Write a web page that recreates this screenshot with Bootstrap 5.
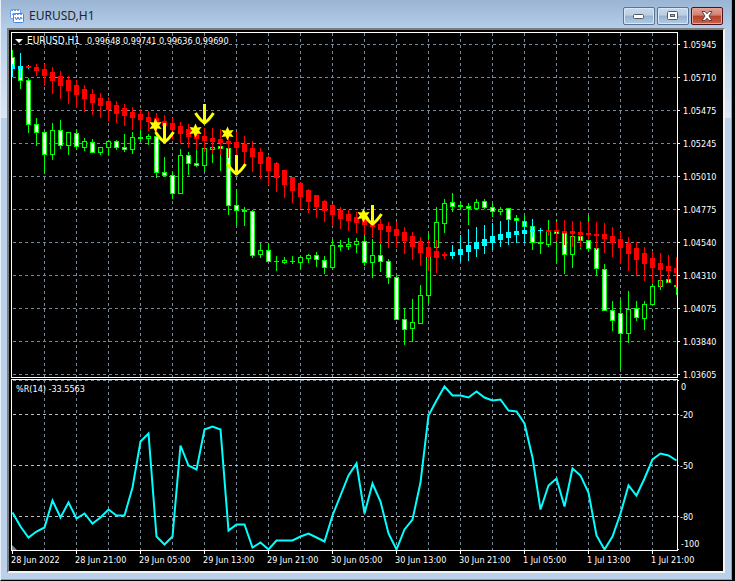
<!DOCTYPE html>
<html lang="en">
<head>
<meta charset="utf-8">
<meta name="viewport" content="width=device-width, initial-scale=1">
<title>EURUSD,H1</title>
<link href="https://cdn.jsdelivr.net/npm/bootstrap@5.3.0/dist/css/bootstrap.min.css" rel="stylesheet">
<style>
  body { background: #000; font-family: "Noto Sans", "Open Sans", sans-serif; }
  .chart-window {
    background: linear-gradient(#9ab4d3 0, #b4cde9 28px, #dbe7f5 118px, #b9d1ea 118px, #b9d1ea 100%);
    border: 1px solid #000; border-top: 0; border-left-color: #e9eff6;
    border-right-width: 2px;
    box-shadow: inset -1px -1px 0 #35c6dc;
    padding: 0 7px 7px 6px; margin-right: 1px;
  }
  .title-bar { height: 28px; padding: 4px 2px 0 3px; }
  .title-text { font-size: 12px; line-height: 16px; color: #1c2530; }
  .title-group { gap: 5px; }
  .caption-group { gap: 2px; }
  .caption-btn {
    width: 32px; height: 18px; border: 1px solid #5c7494; border-radius: 2px;
    background: linear-gradient(#c9d9ea 0, #b9cee4 45%, #96b1cf 50%, #b3cbe4 100%);
    box-shadow: inset 0 0 0 1px #d9e6f3;
  }
  .caption-btn.close-btn {
    border-color: #4b1220;
    background: linear-gradient(#e2a396 0, #d3806f 45%, #b5402a 50%, #c9634a 100%);
    box-shadow: inset 0 0 0 1px #e3a595;
  }
  .client-area { background: #000; border: 2px solid #f4f4f4; border-top-color: #7d7d7d; border-left-color: #7d7d7d; }
  .plot text { font-family: "DejaVu Sans Condensed", "Noto Sans", sans-serif; font-size: 9px; fill: #fff; }
  .plot .symbol-name { font-size: 10px; }
  .plot rect, .plot .crisp { shape-rendering: crispEdges; }
</style>
<script src="https://cdn.jsdelivr.net/npm/bootstrap@5.3.0/dist/js/bootstrap.bundle.min.js"></script>
</head>
<body>
<main class="chart-window vh-100 d-flex flex-column">
  <header class="title-bar d-flex align-items-center justify-content-between flex-shrink-0">
    <div class="title-group d-flex align-items-center">
      <svg width="14" height="14" viewBox="0 0 14 14" aria-hidden="true">
        <rect x=".5" y=".5" width="10" height="9" rx="1" fill="#fff" stroke="#6a9bea"/>
        <path d="M1 1.500h9" stroke="#6a9bea" stroke-dasharray="2 1"/><path d="M2 6l1.500-2 1.500 2 1-2" fill="none" stroke="#5b8fe6"/>
        <rect x="3.500" y="4.500" width="10" height="9" rx="1" fill="#fff" stroke="#4a82e0"/>
        <path d="M4 5.500h9" stroke="#6a9bea" stroke-dasharray="2 1"/><path d="M5 8l1.500 3L8 8l1.500 3L11 8l1 2" fill="none" stroke="#4078dc"/>
      </svg>
      <h1 class="title-text m-0 fw-normal">EURUSD,H1</h1>
    </div>
    <div class="caption-group d-flex">
      <button type="button" class="caption-btn p-0 d-flex align-items-center justify-content-center" aria-label="Minimize">
        <svg width="12" height="6" viewBox="0 0 12 6"><rect x=".5" y="1.500" width="10" height="4" rx="1" fill="#fff" stroke="#505966"/></svg>
      </button>
      <button type="button" class="caption-btn p-0 d-flex align-items-center justify-content-center" aria-label="Restore">
        <svg width="12" height="10" viewBox="0 0 12 10"><rect x=".5" y=".5" width="10" height="8" rx="1" fill="#fff" stroke="#505966"/><rect x="3.500" y="3.500" width="4" height="2" fill="#9db5d0" stroke="#505966"/></svg>
      </button>
      <button type="button" class="caption-btn close-btn p-0 d-flex align-items-center justify-content-center" aria-label="Close">
        <svg width="12" height="10" viewBox="0 0 12 10"><path d="M1 .5h3l2 2.300L8 .5h3L8 5l3 4.500H8L6 7.200 4 9.500H1L4 5z" fill="#fff" stroke="#5a3f45"/></svg>
      </button>
    </div>
  </header>
  <section class="client-area flex-grow-1 overflow-hidden">
    <svg id="plot" class="plot d-block w-100 h-100" viewBox="9 30 714 541" preserveAspectRatio="xMinYMin meet" role="img" aria-label="EURUSD hourly candles with Williams %R"></svg>
  </section>
</main>
<script>
const plot = document.getElementById('plot');
const NS = 'http://www.w3.org/2000/svg';
function add(tag, attrs, text) {
  const el = document.createElementNS(NS, tag);
  for (const k in attrs) el.setAttribute(k, attrs[k]);
  if (text !== undefined) el.textContent = text;
  plot.appendChild(el);
  return el;
}
const rect = (x, y, width, height, fill, extra) => add('rect', { x, y, width, height, fill, ...extra });
const xOf = i => 12 + 8 * i;
const GRID = '#778899', LIME = '#00ff00', RED = '#ff0000', AQUA = '#00ffff';

const clip = add('clipPath', { id: 'inner' });
clip.innerHTML = '<rect x="12" y="33" width="665" height="517"/>';

/* grid */
const dash = { 'stroke-width': 1, 'stroke-dasharray': '3 3', class: 'crisp' };
for (let x = 44; x < 677; x += 32) {
  add('path', { d: `M${x + .5} 33V377`, stroke: GRID, ...dash });
  add('path', { d: `M${x + .5} 380V550`, stroke: GRID, ...dash });
}
const prices = ['1.05945','1.05710','1.05475','1.05245','1.05010','1.04775','1.04540','1.04310','1.04075','1.03840','1.03605'];
prices.forEach((p, i) => {
  const y = 44 + 33 * i;
  add('path', { d: `M13 ${y + .5}H677`, stroke: GRID, ...dash });
  rect(678, y, 2, 1, '#fff');
  add('text', { x: 683, y: y + 4 }, p);
});
add('path', { d: 'M13 380.5H677', stroke: GRID, ...dash });
[414, 465, 516].forEach(y => add('path', { d: `M13 ${y + .5}H677`, stroke: '#c0c0c0', ...dash }));

/* price bars: high, body top, body bottom, low, filled */
const bars = [
[50,57,68,76,1],[66,66,80,88,1],[78,80,124,132,1],[118,124,132,145,1],[132,132,154,173,1],[123,130,154,159,0],[120,130,145,148,1],[132,132,145,154,0],
[129,133,146,149,1],[138,141,147,150,0],[139,142,152,152,1],[147,147,152,154,0],[140,141,147,154,0],[140,141,147,149,1],[134,147,149,151,1],[132,137,149,153,0],
[130,137,138,141,0],[134,136,138,144,0],[134,136,172,177,1],[157,172,175,176,1],[172,175,193,198,1],[149,155,193,193,0],[152,155,163,174,1],[150,163,165,166,1],
[148,148,165,171,0],[146,147,149,162,0],[145,146,148,170,1],[148,148,205,214,1],[189,205,210,225,1],[207,210,211,225,0],[210,211,255,257,1],[243,250,254,257,0],
[243,250,261,261,1],[256,261,261,270,0],[257,260,262,263,0],[256,261,261,263,0],[256,257,262,268,0],[254,255,258,262,0],[252,255,259,266,1],[256,260,267,273,1],
[239,245,267,268,0],[240,245,246,250,0],[238,244,246,249,0],[238,241,244,252,0],[235,241,262,265,1],[239,255,262,277,0],[240,255,261,271,1],[259,261,277,283,1],
[276,277,319,319,1],[308,319,329,344,1],[299,322,328,341,0],[285,295,323,323,0],[234,247,295,302,0],[207,222,247,247,0],[199,203,223,232,0],[193,202,206,211,1],
[201,205,206,209,0],[203,206,208,224,1],[199,202,208,209,0],[199,201,207,208,1],[203,207,211,216,1],[207,209,211,214,0],[208,208,219,219,1],[215,218,220,220,1],
[216,221,226,226,1],[226,226,242,249,1],[228,242,243,253,0],[220,231,244,246,0],[220,231,233,262,1],[233,233,254,273,1],[236,236,254,267,0],[236,236,240,248,1],
[215,240,248,251,1],[248,248,268,275,1],[264,269,310,310,1],[301,310,320,330,1],[300,313,333,369,1],[291,309,333,342,0],[301,308,317,320,1],[301,304,318,329,0],
[284,286,304,304,0],[280,280,286,289,0],[279,279,282,282,1],[285,285,286,294,0]];
bars.forEach(([h, t, b, l, filled], i) => {
  const x = xOf(i), c = { 'clip-path': 'url(#inner)' };
  rect(x, h, 1, l - h + 1, LIME, c);
  rect(x - 2, t, 5, b - t + 1, LIME, c);
  if (b - t > 1) rect(x - 1, t + 1, 3, b - t - 1, filled ? '#fff' : '#000', c);
});

/* smoothed bars: high, body top, body bottom, low */
const smooth = [
[64,66,68,76],[53,66,68,77],[65,66,67,68],[64,67,70,75],[64,69,75,85],[67,72,80,93],[71,76,85,98],[76,80,90,103],[80,85,94,107],[85,89,98,111],
[89,94,102,114],[93,98,105,117],[97,101,109,120],[101,105,113,122],[104,108,115,125],[107,112,117,129],[109,114,119,129],[111,117,121,130],[113,118,125,134],[115,121,125,135],
[118,123,129,138],[122,126,133,143],[124,129,136,147],[126,131,138,149],[128,136,140,151],[128,138,141,153],[129,139,142,154],[130,141,143,157],[132,142,147,157],[136,144,151,164],
[141,148,156,171],[148,152,163,178],[155,157,170,184],[162,163,177,191],[170,170,184,197],[177,177,190,202],[182,183,196,208],[189,190,201,212],[195,195,206,217],[200,201,210,221],
[204,205,214,225],[207,210,218,228],[210,214,220,230],[212,217,222,232],[214,219,224,234],[217,222,226,237],[219,224,229,243],[222,226,231,247],[222,229,235,247],[227,232,240,253],
[232,236,246,259],[237,241,252,265],[240,247,256,270],[240,251,257,272],[252,254,255,258],[245,252,255,258],[235,249,254,261],[229,245,251,260],[227,242,248,256],[225,239,245,253],
[223,236,242,249],[221,234,239,246],[220,232,237,244],[221,231,234,242],[219,230,233,242],[219,230,231,236],[228,230,230,233],[230,230,231,235],[222,230,231,240],[220,231,232,244],
[221,231,233,246],[221,232,234,247],[222,233,234,239],[222,234,235,249],[223,234,238,252],[227,236,242,256],[232,239,247,263],[237,243,253,270],[242,248,259,275],[247,253,263,280],
[251,258,267,283],[253,263,269,286],[255,266,270,282],[257,268,272,286]];
smooth.forEach(([h, t, b, l], i) => {
  const up = i < 2 || (i >= 55 && i <= 66), c = { 'clip-path': 'url(#inner)' };
  const color = up ? AQUA : RED;
  rect(xOf(i), h, 1, l - h + 1, i === 2 ? AQUA : color, c);
  rect(xOf(i) - 2, t, 5, b - t + 1, color, c);
});

/* signals */
[[155, 125], [195, 130], [227, 133], [363, 215]].forEach(([x, y]) => {
  const pts = [];
  for (let k = 0; k < 12; k++) {
    const r = k % 2 ? 3.6 : 7, a = Math.PI / 6 * k - Math.PI / 2;
    pts.push((x + .5 + r * Math.cos(a)).toFixed(1) + ',' + (y + .5 + r * Math.sin(a)).toFixed(1));
  }
  add('polygon', { points: pts.join(' '), fill: '#ffff00' });
});
[[164, 143], [204, 124], [236, 175], [372, 225]].forEach(([x, y]) =>
  add('path', { d: `M${x + .5} ${y - 20}V${y}M${x - 8.500} ${y - 11}Q${x - 4} ${y - 4} ${x + .5} ${y - 1}Q${x + 5} ${y - 4} ${x + 9.500} ${y - 11}`, fill: 'none', stroke: '#ffff00', 'stroke-width': 3 }));

/* Williams %R */
const wpr = [512,526,537,531,527,500,517,502,518,513,523,517,509,515,515,487,441,433,536,544,536,445,465,469,429,426,429,530,524,524,547,542,549,540,540,540,536,533,537,541,
515,495,475,463,513,483,501,533,549,529,519,482,415,400,386,395,395,397,391,397,400,399,410,411,423,457,509,485,478,506,468,475,492,535,549,536,513,485,495,478,459,453,455,460];
add('polyline', { points: wpr.map((y, i) => `${xOf(i) + .5},${y + .5}`).join(' '), fill: 'none', stroke: AQUA, 'stroke-width': 2, 'clip-path': 'url(#inner)' });
add('path', { d: 'M12 545v5h5z', fill: GRID });

/* frames, scales and captions */
add('path', { d: 'M11.500 32.500H677.500V377.500H11.500zM11.500 379.500H677.500V550.500H11.500z', fill: 'none', stroke: '#fff', class: 'crisp' });
[['0', 390, 681], ['-20', 418, 680], ['-50', 469, 680], ['-80', 520, 680], ['-100', 547, 681]].forEach(([s, y, x]) => add('text', { x, y }, s));
[380, 414, 465, 516, 549].forEach(y => rect(678, y, 1, 1, '#fff'));
['28 Jun 2022','28 Jun 21:00','29 Jun 05:00','29 Jun 13:00','29 Jun 21:00','30 Jun 05:00','30 Jun 13:00','30 Jun 21:00','1 Jul 05:00','1 Jul 13:00','1 Jul 21:00'].forEach((s, i) => {
  rect(12 + 64 * i, 551, 1, 3, '#fff');
  add('text', { x: 11 + 64 * i, y: 563 }, s);
});
add('path', { d: 'M15 39h8l-4 4z', fill: '#fff' });
add('text', { x: 27, y: 44, class: 'symbol-name' }, 'EURUSD,H1');
add('text', { x: 87, y: 44 }, '0.99648 0.99741 0.99636 0.99690');
add('text', { x: 16, y: 392 }, '%R(14) -33.5563');
</script>
</body>
</html>
